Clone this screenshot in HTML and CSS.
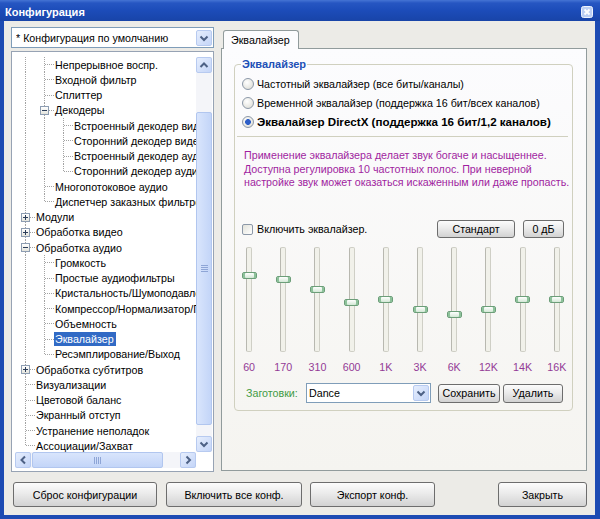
FILE: index.html
```html
<!DOCTYPE html>
<html lang="ru">
<head>
    <meta charset="UTF-8">
    <meta name="viewport" content="width=device-width, initial-scale=1.0">
    <title>Конфигурация</title>
    <link rel="stylesheet" href="styles.css">
</head>
<body>
<div class="window">
    <div class="titlebar">
        <span class="title">Конфигурация</span>
        <span class="close">
            <svg width="12" height="12" viewBox="0 0 12 12"><rect x="0.5" y="0.5" width="11" height="11" rx="2" fill="#bccff3" stroke="#eef3fc"/><path d="M3.5 3.5 L8.5 8.5 M8.5 3.5 L3.5 8.5" stroke="#fff" stroke-width="1.8"/></svg>
        </span>
    </div>
    <div class="content">
        <div class="main">
            <div class="sidebar">
                <div class="combo">
                    <span class="combo-text">* Конфигурация по умолчанию</span>
                    <span class="sb-btn"><svg width="16" height="16" viewBox="0 0 16 16"><polyline points="4.5,6.5 8,10 11.5,6.5" fill="none" stroke="#4d6185" stroke-width="2"/></svg></span>
                </div>
                <div class="tree-box">
                    <div class="tree">
                        <div class="row"><i class="c v"></i><i class="c t"></i><span class="lbl">Непрерывное воспр.</span></div>
                        <div class="row"><i class="c v"></i><i class="c t"></i><span class="lbl">Входной фильтр</span></div>
                        <div class="row"><i class="c v"></i><i class="c t"></i><span class="lbl">Сплиттер</span></div>
                        <div class="row"><i class="c v"></i><i class="c t"><b class="box"></b></i><span class="lbl">Декодеры</span></div>
                        <div class="row"><i class="c v"></i><i class="c v"></i><i class="c t"></i><span class="lbl">Встроенный декодер видео</span></div>
                        <div class="row"><i class="c v"></i><i class="c v"></i><i class="c t"></i><span class="lbl">Сторонний декодер видео</span></div>
                        <div class="row"><i class="c v"></i><i class="c v"></i><i class="c t"></i><span class="lbl">Встроенный декодер аудио</span></div>
                        <div class="row"><i class="c v"></i><i class="c v"></i><i class="c l"></i><span class="lbl">Сторонний декодер аудио</span></div>
                        <div class="row"><i class="c v"></i><i class="c t"></i><span class="lbl">Многопотоковое аудио</span></div>
                        <div class="row"><i class="c v"></i><i class="c l"></i><span class="lbl">Диспетчер заказных фильтров</span></div>
                        <div class="row"><i class="c t"><b class="box plus"></b></i><span class="lbl">Модули</span></div>
                        <div class="row"><i class="c t"><b class="box plus"></b></i><span class="lbl">Обработка видео</span></div>
                        <div class="row"><i class="c t"><b class="box"></b></i><span class="lbl">Обработка аудио</span></div>
                        <div class="row"><i class="c v"></i><i class="c t"></i><span class="lbl">Громкость</span></div>
                        <div class="row"><i class="c v"></i><i class="c t"></i><span class="lbl">Простые аудиофильтры</span></div>
                        <div class="row"><i class="c v"></i><i class="c t"></i><span class="lbl">Кристальность/Шумоподавление</span></div>
                        <div class="row"><i class="c v"></i><i class="c t"></i><span class="lbl">Компрессор/Нормализатор/Предусилитель</span></div>
                        <div class="row"><i class="c v"></i><i class="c t"></i><span class="lbl">Объемность</span></div>
                        <div class="row"><i class="c v"></i><i class="c t"></i><span class="lbl selected">Эквалайзер</span></div>
                        <div class="row"><i class="c v"></i><i class="c l"></i><span class="lbl">Ресэмплирование/Выход</span></div>
                        <div class="row"><i class="c t"><b class="box plus"></b></i><span class="lbl">Обработка субтитров</span></div>
                        <div class="row"><i class="c t"></i><span class="lbl">Визуализации</span></div>
                        <div class="row"><i class="c t"></i><span class="lbl">Цветовой баланс</span></div>
                        <div class="row"><i class="c t"></i><span class="lbl">Экранный отступ</span></div>
                        <div class="row"><i class="c t"></i><span class="lbl">Устранение неполадок</span></div>
                        <div class="row"><i class="c l"></i><span class="lbl">Ассоциации/Захват</span></div>
                    </div>
                    <div class="vscroll">
                        <span class="sb-btn"><svg width="16" height="16" viewBox="0 0 16 16"><polyline points="4.5,10 8,6.5 11.5,10" fill="none" stroke="#4d6185" stroke-width="2"/></svg></span>
                        <div class="vtrack"><div class="vthumb"></div></div>
                        <span class="sb-btn"><svg width="16" height="16" viewBox="0 0 16 16"><polyline points="4.5,6.5 8,10 11.5,6.5" fill="none" stroke="#4d6185" stroke-width="2"/></svg></span>
                    </div>
                    <div class="hscroll">
                        <span class="sb-btn"><svg width="16" height="16" viewBox="0 0 16 16"><polyline points="10,4.5 6.5,8 10,11.5" fill="none" stroke="#4d6185" stroke-width="2"/></svg></span>
                        <div class="htrack"><div class="hthumb"></div></div>
                        <span class="sb-btn"><svg width="16" height="16" viewBox="0 0 16 16"><polyline points="6.5,4.5 10,8 6.5,11.5" fill="none" stroke="#4d6185" stroke-width="2"/></svg></span>
                    </div>
                    <div class="corner"></div>
                </div>
            </div>

            <div class="tabs">
                <div class="tab-strip"><div class="tab">Эквалайзер</div></div>
                <div class="tab-panel">
                    <fieldset class="group">
                        <legend>Эквалайзер</legend>
                        <div class="radios">
                            <div class="radio-row"><span class="radio"></span>Частотный эквалайзер (все биты/каналы)</div>
                            <div class="radio-row"><span class="radio"></span>Временной эквалайзер (поддержка 16 бит/всех каналов)</div>
                            <div class="radio-row strong"><span class="radio checked"></span>Эквалайзер DirectX (поддержка 16 бит/1,2 каналов)</div>
                        </div>
                        <div class="separator"></div>
                        <p class="info">Применение эквалайзера делает звук богаче и насыщеннее.<br>Доступна регулировка 10 частотных полос. При неверной<br>настройке звук может оказаться искаженным или даже пропасть.</p>

                        <div class="eq-head">
                            <span class="check"></span>
                            <span class="check-text">Включить эквалайзер.</span>
                            <span class="btn btn-std">Стандарт</span>
                            <span class="btn btn-zero">0 дБ</span>
                        </div>

                        <div class="bands">
                            <div class="band"><div class="track"><span class="thumb" style="margin-top:24.5px"></span></div><span class="freq">60</span></div>
                            <div class="band"><div class="track"><span class="thumb" style="margin-top:28.5px"></span></div><span class="freq">170</span></div>
                            <div class="band"><div class="track"><span class="thumb" style="margin-top:38.5px"></span></div><span class="freq">310</span></div>
                            <div class="band"><div class="track"><span class="thumb" style="margin-top:51.5px"></span></div><span class="freq">600</span></div>
                            <div class="band"><div class="track"><span class="thumb" style="margin-top:48.5px"></span></div><span class="freq">1K</span></div>
                            <div class="band"><div class="track"><span class="thumb" style="margin-top:58.5px"></span></div><span class="freq">3K</span></div>
                            <div class="band"><div class="track"><span class="thumb" style="margin-top:63.5px"></span></div><span class="freq">6K</span></div>
                            <div class="band"><div class="track"><span class="thumb" style="margin-top:58.5px"></span></div><span class="freq">12K</span></div>
                            <div class="band"><div class="track"><span class="thumb" style="margin-top:48.5px"></span></div><span class="freq">14K</span></div>
                            <div class="band"><div class="track"><span class="thumb" style="margin-top:48.5px"></span></div><span class="freq">16K</span></div>
                        </div>

                        <div class="presets">
                            <span class="presets-label">Заготовки:</span>
                            <div class="combo preset-combo">
                                <span class="combo-text">Dance</span>
                                <span class="sb-btn"><svg width="16" height="16" viewBox="0 0 16 16"><polyline points="4.5,6.5 8,10 11.5,6.5" fill="none" stroke="#4d6185" stroke-width="2"/></svg></span>
                            </div>
                            <span class="btn btn-save">Сохранить</span>
                            <span class="btn btn-del">Удалить</span>
                        </div>
                    </fieldset>
                </div>
            </div>
        </div>

        <div class="actions">
            <span class="btn btn-reset">Сброс конфигурации</span>
            <span class="btn btn-all">Включить все конф.</span>
            <span class="btn btn-export">Экспорт конф.</span>
            <span class="btn btn-close">Закрыть</span>
        </div>
    </div>
</div>
</body>
</html>
```

FILE: styles.css
```css
body {
    margin: 0;
    font-family: "Liberation Sans", Arial, sans-serif;
    font-size: 10.7px;
    color: #000;
    background: #fff;
}
.window {
    width: 600px;
    height: 519px;
    display: flex;
    flex-direction: column;
}
.titlebar {
    height: 21px;
    box-sizing: border-box;
    display: flex;
    align-items: center;
    padding: 3px 7px 0 5px;
    background: linear-gradient(#4574d4 0, #2656c2 3px, #1c4cb9 50%, #1844a8 100%);
    color: #fff;
    font-weight: bold;
    font-size: 11px;
}
.title {
    flex: 1;
}
.close {
    display: flex;
}
.content {
    flex: 1;
    min-height: 0;
    display: flex;
    flex-direction: column;
    padding: 6px 8px 8px 7px;
    border: solid #1d4bb3;
    border-width: 0 5px 4px 4px;
    background: #ecebe7;
}
.main {
    flex: 1;
    min-height: 0;
    display: flex;
    gap: 7px;
}

/* left column */
.sidebar {
    flex: none;
    width: 203px;
    display: flex;
    flex-direction: column;
    gap: 3px;
}
.combo {
    height: 21px;
    box-sizing: border-box;
    border: 1px solid #7f9db9;
    background: #fff;
    display: flex;
    align-items: center;
    padding: 0 1px 0 4px;
}
.combo-text {
    flex: 1;
    white-space: nowrap;
    overflow: hidden;
}
.sb-btn {
    flex: none;
    width: 16px;
    height: 16px;
    box-sizing: border-box;
    border: 1px solid #b7caf0;
    border-radius: 2px;
    background: linear-gradient(135deg, #e6eefd, #c4d5f8);
    display: flex;
    align-items: center;
    justify-content: center;
}
.sb-btn svg {
    flex: none;
}
.tree-box {
    flex: 1;
    min-height: 0;
    border: 1px solid #97a3b4;
    background: #fff;
    padding: 5px 1px 3px 3px;
    display: grid;
    grid-template-columns: 1fr 16px;
    grid-template-rows: 1fr 16px;
}
.tree {
    overflow: hidden;
    padding-left: 1px;
}
.row {
    height: 15.25px;
    display: flex;
    align-items: center;
    white-space: nowrap;
}
.c {
    flex: none;
    width: 19px;
    align-self: stretch;
    display: flex;
    align-items: center;
    justify-content: center;
}
.v {
    background: repeating-linear-gradient(#a3a3a3 0 1px, transparent 1px 2px) 9px 0 / 1px 100% no-repeat;
}
.t {
    background:
        repeating-linear-gradient(to right, #a3a3a3 0 1px, transparent 1px 2px) 10px 50% / 9px 1px no-repeat,
        repeating-linear-gradient(#a3a3a3 0 1px, transparent 1px 2px) 9px 0 / 1px 100% no-repeat;
}
.l {
    background:
        repeating-linear-gradient(to right, #a3a3a3 0 1px, transparent 1px 2px) 10px 50% / 9px 1px no-repeat,
        repeating-linear-gradient(#a3a3a3 0 1px, transparent 1px 2px) 9px 0 / 1px 50% no-repeat;
}
.box {
    width: 9px;
    height: 9px;
    box-sizing: border-box;
    border: 1px solid #8d9db2;
    background:
        linear-gradient(#2c3e5a, #2c3e5a) center / 5px 1px no-repeat,
        linear-gradient(#fff, #e4e4dc);
}
.box.plus {
    background:
        linear-gradient(#2c3e5a, #2c3e5a) center / 5px 1px no-repeat,
        linear-gradient(#2c3e5a, #2c3e5a) center / 1px 5px no-repeat,
        linear-gradient(#fff, #e4e4dc);
}
.lbl {
    padding: 1px 2px 1px 1px;
    line-height: 12px;
}
.lbl.selected {
    background: #316ac5;
    color: #fff;
}
.vscroll {
    display: flex;
    flex-direction: column;
    background: #f4f5f9;
}
.vtrack {
    flex: 1;
    display: flex;
    padding: 39px 0 11px;
}
.vthumb {
    flex: 1;
    border: 1px solid #b1c6ef;
    border-radius: 2px;
    background:
        repeating-linear-gradient(#8ea5d6 0 1px, transparent 1px 2px) center / 7px 7px no-repeat,
        linear-gradient(to right, #d9e5fc, #c3d5f8);
}
.hscroll {
    display: flex;
    background: #f4f5f9;
}
.htrack {
    flex: 1;
    display: flex;
    padding: 0 17px 0 1px;
}
.hthumb {
    flex: 1;
    border: 1px solid #b1c6ef;
    border-radius: 2px;
    background:
        repeating-linear-gradient(to right, #8ea5d6 0 1px, transparent 1px 2px) center / 7px 7px no-repeat,
        linear-gradient(#d9e5fc, #c3d5f8);
}
.corner {
    background: #fff;
}

/* right column */
.tabs {
    flex: 1;
    min-width: 0;
    display: flex;
    flex-direction: column;
    padding-top: 3px;
}
.tab-strip {
    display: flex;
    padding-left: 2px;
}
.tab {
    height: 19px;
    box-sizing: border-box;
    padding: 0 8px 0 7px;
    border: 1px solid #919b9c;
    border-bottom: 0;
    border-radius: 3px 3px 0 0;
    background: #fcfcfe;
    display: flex;
    align-items: center;
    margin-bottom: -1px;
    position: relative;
    z-index: 1;
}
.tab-panel {
    flex: 1;
    border: 1px solid #919b9c;
    background: linear-gradient(#fcfcfe, #f5f4f0);
    padding: 9px 13px 0 12px;
    margin-bottom: 1px;
}
.group {
    margin: 0;
    padding: 0 0 7px;
    min-width: 0;
    border: 1px solid #d0d0bf;
    border-radius: 4px;
}
.group legend {
    margin-left: 6px;
    padding: 0 1px;
    line-height: 13px;
    font-size: 11px;
    font-weight: bold;
    color: #2150b6;
}
.radios {
    padding: 3px 0 0 7px;
}
.radio-row {
    height: 19px;
    display: flex;
    align-items: center;
    gap: 2px;
    white-space: nowrap;
}
.radio-row.strong {
    font-weight: bold;
    font-size: 11.6px;
}
.radio {
    flex: none;
    width: 12px;
    height: 12px;
    box-sizing: border-box;
    border: 1px solid #8c98a8;
    border-radius: 50%;
    background: radial-gradient(circle at 40% 35%, #fff, #d8d8d0);
    margin-right: 1px;
}
.radio.checked {
    background:
        radial-gradient(circle, #2e5fc8 0 2.6px, transparent 3.2px),
        radial-gradient(circle at 40% 35%, #fff, #d8d8d0);
}
.separator {
    margin: 5px 4px 0 2px;
    border-top: 1px solid #d0d0bf;
}
.info {
    margin: 12px 0 0;
    padding-left: 9px;
    line-height: 13.5px;
    color: #a01ea0;
    white-space: nowrap;
}
.eq-head {
    margin-top: 30px;
    height: 19px;
    display: flex;
    align-items: center;
    padding: 0 8px 0 7px;
}
.check {
    width: 11px;
    height: 11px;
    box-sizing: border-box;
    border: 1px solid #8c98a8;
    border-radius: 2px;
    background: linear-gradient(135deg, #e2e2da, #fff);
    margin-right: 4px;
}
.check-text {
    flex: 1;
}
.btn {
    height: 18px;
    box-sizing: border-box;
    border: 1px solid #6d6d6d;
    border-radius: 3px;
    background: linear-gradient(#fcfcfc, #ebebeb 45%, #d2d2d2);
    display: flex;
    align-items: center;
    justify-content: center;
    white-space: nowrap;
}
.btn-std {
    width: 78px;
}
.btn-zero {
    width: 41px;
    margin-left: 8px;
}
.bands {
    margin: 8px 0 0 -3px;
    display: grid;
    grid-template-columns: repeat(10, 34.2px);
}
.band {
    display: flex;
    flex-direction: column;
    align-items: center;
}
.track {
    width: 6px;
    height: 105px;
    box-sizing: border-box;
    border: 1px solid #cfcfc6;
    border-left-color: #b8b8b0;
    border-radius: 2px;
    background: #f1f1ea;
    display: flex;
    flex-direction: column;
    align-items: center;
}
.thumb {
    flex: none;
    width: 15px;
    height: 7px;
    box-sizing: border-box;
    border: 1px solid #6c9e79;
    border-radius: 2px;
    background: linear-gradient(#ffffff, #d3e8d6);
    box-shadow: inset 2px 0 #8cc29a, inset -2px 0 #8cc29a;
}
.freq {
    margin-top: 9.5px;
    line-height: 13px;
    color: #933a96;
}
.presets {
    margin-top: 9px;
    height: 20px;
    display: flex;
    align-items: center;
    padding-left: 11px;
}
.presets-label {
    width: 60px;
    color: #3f9a44;
}
.preset-combo {
    width: 125px;
    height: 20px;
    padding-left: 2px;
}
.btn-save {
    width: 62px;
    height: 19px;
    margin-left: 7px;
}
.btn-del {
    width: 60px;
    height: 19px;
    margin-left: 3px;
}

/* bottom buttons */
.actions {
    margin-top: 10px;
    height: 25px;
    display: flex;
    padding-left: 2px;
}
.actions .btn {
    height: 25px;
}
.btn-reset {
    width: 144px;
}
.btn-all {
    width: 136px;
    margin-left: 9px;
}
.btn-export {
    width: 125px;
    margin-left: 8px;
}
.btn-close {
    width: 89px;
    margin-left: auto;
}
```
